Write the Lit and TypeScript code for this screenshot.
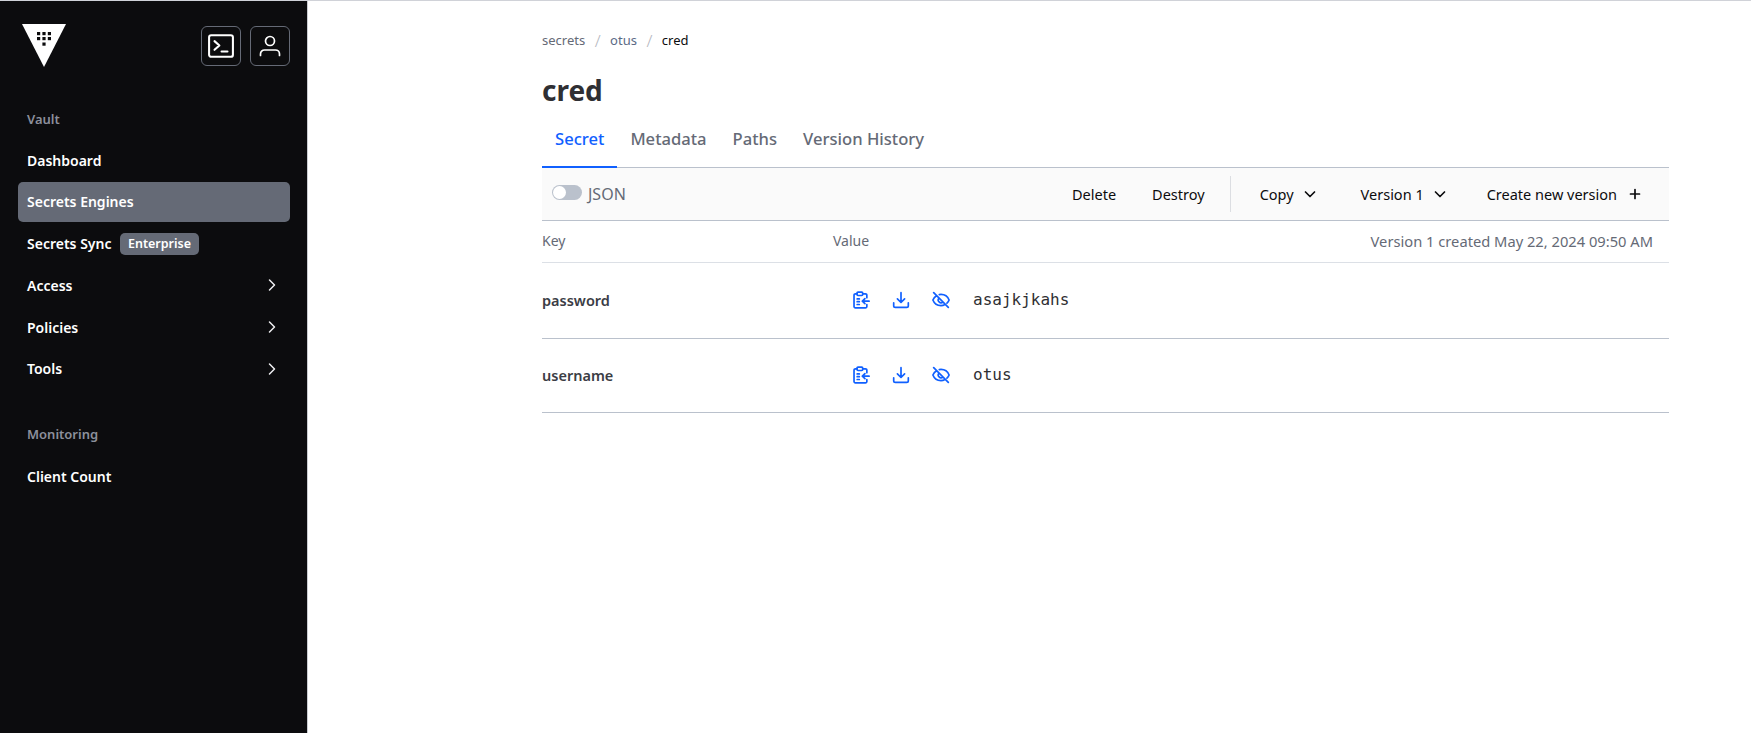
import { LitElement, html, css } from 'lit';
import { customElement } from 'lit/decorators.js';

const chevronRight = html`<svg class="chev" viewBox="0 0 16 16" width="16" height="16" fill="none" stroke="currentColor" stroke-width="1.5" stroke-linecap="round" stroke-linejoin="round"><path d="M5.500 3 10.500 8l-5 5"/></svg>`;
const chevronDown = html`<svg viewBox="0 0 16 16" width="16" height="16" fill="none" stroke="currentColor" stroke-width="1.700" stroke-linecap="round" stroke-linejoin="round"><path d="M3.500 6 8 10.500 12.500 6"/></svg>`;
const plus = html`<svg viewBox="0 0 16 16" width="16" height="16" fill="none" stroke="currentColor" stroke-width="1.700" stroke-linecap="round"><path d="M8 3.500v9M3.500 8h9"/></svg>`;

const clipboard = html`<svg viewBox="0 0 16 16" width="18" height="18" fill="none" stroke="currentColor" stroke-width="1.500" stroke-linecap="round" stroke-linejoin="round"><path d="M4.500 2.500H3a1.200 1.200 0 0 0-1.200 1.200v10.100A1.200 1.200 0 0 0 3 15h9a1.200 1.200 0 0 0 1.200-1.200v-1.800M9.500 2.500H12a1.200 1.200 0 0 1 1.200 1.200V6"/><rect x="4.500" y="1" width="5" height="3" rx=".8"/><path d="M4.600 7h1.900M4.600 9.500h1.900M4.600 12h1.900M15.200 9H9.200M11.500 6.700 9.200 9l2.300 2.300"/></svg>`;
const download = html`<svg viewBox="0 0 16 16" width="18" height="18" fill="none" stroke="currentColor" stroke-width="1.500" stroke-linecap="round" stroke-linejoin="round"><path d="M8 1.500v8.500M4.800 7 8 10.200 11.200 7M1.500 10.500v2.500a1.500 1.500 0 0 0 1.500 1.500h10a1.500 1.500 0 0 0 1.500-1.500v-2.500"/></svg>`;
const eyeOff = html`<svg viewBox="0 0 16 16" width="18" height="18" fill="none" stroke="currentColor" stroke-width="1.500" stroke-linecap="round" stroke-linejoin="round"><path d="M1.500 1.500l13 13M4 4.200C2.400 5.200 1.300 6.700.8 8c1 2.600 3.800 5 7.200 5 1.300 0 2.500-.4 3.600-1M6.500 3.200C7 3.100 7.500 3 8 3c3.400 0 6.200 2.400 7.200 5-.4 1-1 2-1.900 2.800M6.300 6.300a2.400 2.400 0 0 0 3.400 3.400"/></svg>`;

@customElement('app-root')
export class AppRoot extends LitElement {
  static styles = css`
    :host {
      display: block;
      height: 733px;
      overflow: hidden;
      font-family: "Noto Sans", "Open Sans", sans-serif;
      background: #fff;
    }
    .page {
      display: flex;
      height: 733px;
      box-sizing: border-box;
      border-top: 1px solid #d0d2d8;
    }
    .sidebar {
      width: 308px;
      flex: none;
      box-sizing: border-box;
      background: #0c0c0e;
      padding: 0 17px 0 18px;
      border-right: 1px solid #c9cbd0;
    }
    .top {
      display: flex;
      justify-content: space-between;
      align-items: flex-start;
      height: 101px;
      padding: 23px 0 0 4px;
      box-sizing: border-box;
    }
    .tools {
      display: flex;
      gap: 9px;
      margin-top: 2px;
    }
    .tool {
      width: 40px;
      height: 40px;
      box-sizing: border-box;
      border: 1px solid #656a76;
      border-radius: 6px;
      display: flex;
      align-items: center;
      justify-content: center;
      color: #fff;
    }
    .group {
      color: #8c909c;
      font-size: 13px;
      font-weight: 600;
      line-height: 18px;
      padding: 8px 9px 12px;
    }
    .group.second {
      margin-top: 28px;
      padding-bottom: 14px;
    }
    .nav {
      display: flex;
      align-items: center;
      height: 40px;
      margin-bottom: 1.750px;
      padding: 0 10px 0 9px;
      border-radius: 5px;
      color: #fff;
      font-size: 14px;
      font-weight: 600;
    }
    .nav.active {
      background: #656a76;
    }
    .nav .chev {
      margin-left: auto;
      color: #efeff1;
    }
    .badge {
      margin-left: 9px;
      padding: 0 7.500px;
      height: 22px;
      line-height: 21px;
      border-radius: 5px;
      background: #656a76;
      font-size: 12.500px;
      font-weight: 600;
    }
    main {
      flex: 1;
      min-width: 0;
      padding: 0 82px 0 234px;
    }
    .crumbs {
      display: flex;
      align-items: center;
      height: 22px;
      margin-top: 28px;
      font-size: 13px;
      color: #656a76;
    }
    .crumbs .sep {
      color: #b4b7c0;
      margin: 0 9.500px;
      font-size: 17px;
      font-weight: 300;
    }
    .crumbs .link {
      color: #5b6b85;
    }
    .crumbs .cur {
      color: #0c0c0e;
    }
    h1 {
      margin: 19px 0 0;
      font-size: 28px;
      line-height: 40px;
      font-weight: 700;
      color: #2f2f33;
    }
    .tabs {
      display: flex;
      height: 54px;
      box-sizing: border-box;
      margin-top: 4px;
      align-items: stretch;
      border-bottom: 1px solid #bac1cc;
    }
    .tab {
      display: flex;
      align-items: center;
      padding: 0 13px 3px;
      font-size: 16.600px;
      font-weight: 500;
      color: #656a76;
      margin-bottom: -1px;
      border-bottom: 2px solid transparent;
    }
    .tab.active {
      color: #1060ff;
      border-bottom-color: #1060ff;
    }
    .toolbar {
      display: flex;
      align-items: center;
      height: 53px;
      box-sizing: border-box;
      background: #fafafa;
      border-bottom: 1px solid #bac1cc;
      padding: 0 26px 0 10px;
      font-size: 14.500px;
      color: #0c0c0e;
    }
    .toggle {
      display: flex;
      align-items: center;
      color: #656a76;
      font-size: 16px;
      gap: 6px;
    }
    .switch {
      width: 30px;
      height: 15px;
      border-radius: 8px;
      background: #bac1cc;
      position: relative;
      margin-top: -4px;
    }
    .switch::after {
      content: "";
      position: absolute;
      left: 1px;
      top: 1px;
      width: 13px;
      height: 13px;
      border-radius: 50%;
      background: #fff;
    }
    .actions {
      margin-left: auto;
      display: flex;
      align-items: center;
    }
    .act {
      display: flex;
      align-items: center;
      gap: 8px;
    }
    .act.near {
      margin-left: 36px;
    }
    .act.version {
      margin-left: 43px;
    }
    .act.add {
      margin-left: 39px;
      gap: 10px;
    }
    .divider {
      width: 1px;
      height: 36px;
      background: #dcdee2;
      margin: 0 29px 0 25px;
    }
    .row {
      display: flex;
      align-items: center;
      box-sizing: border-box;
      border-bottom: 1px solid #bac1cc;
      height: 74px;
      padding-bottom: 2px;
    }
    .head + .row {
      height: 76px;
    }
    .row.head {
      height: 42px;
      padding-bottom: 2px;
      border-bottom-color: #dce0e6;
      font-size: 14px;
      color: #656a76;
    }
    .key {
      width: 291px;
      flex: none;
      font-size: 14.500px;
      font-weight: 600;
      color: #3b3d45;
    }
    .head .key {
      font-size: 14px;
      font-weight: 400;
      color: #656a76;
    }
    .val {
      display: flex;
      align-items: center;
      color: #1060ff;
    }
    .val .ico {
      display: flex;
      width: 40px;
      justify-content: center;
    }
    .icons {
      display: flex;
      padding-left: 8px;
    }
    .secret {
      margin-left: 12px;
      color: #2f2f33;
      font-family: "DejaVu Sans Mono", monospace;
      font-size: 16px;
    }
    .meta {
      margin-left: auto;
      padding-right: 16px;
      font-size: 14.700px;
    }
  `;

  renderRow(key: string, value: string) {
    return html`
      <div class="row">
        <div class="key">${key}</div>
        <div class="val">
          <div class="icons">
            <span class="ico">${clipboard}</span>
            <span class="ico">${download}</span>
            <span class="ico">${eyeOff}</span>
          </div>
          <span class="secret">${value}</span>
        </div>
      </div>
    `;
  }

  render() {
    return html`
      <div class="page">
        <aside class="sidebar">
          <div class="top">
            <svg width="44" height="43" viewBox="0 0 44 43">
              <path fill="#fff" d="M0 0h44L22 43z"/>
              <g fill="#0c0c0e">
                <rect x="15" y="8" width="3.200" height="3.200"/><rect x="20.400" y="8" width="3.200" height="3.200"/><rect x="25.800" y="8" width="3.200" height="3.200"/>
                <rect x="15" y="13" width="3.200" height="3.200"/><rect x="20.400" y="13" width="3.200" height="3.200"/><rect x="25.800" y="13" width="3.200" height="3.200"/>
                <rect x="20.400" y="18.500" width="3.200" height="3.200"/>
              </g>
            </svg>
            <div class="tools">
              <div class="tool">
                <svg width="26" height="26" viewBox="0 0 24 24" fill="none" stroke="currentColor" stroke-width="1.900" stroke-linecap="round" stroke-linejoin="round"><rect x="1" y="2" width="22" height="20" rx="2"/><path d="M6 7.500l4.500 4L6 15.500M12.500 17H18"/></svg>
              </div>
              <div class="tool">
                <svg width="24" height="24" viewBox="0 0 24 24" fill="none" stroke="currentColor" stroke-width="1.700" stroke-linecap="round"><circle cx="12" cy="7" r="4.500"/><path d="M2.500 21.500v-1.500a4 4 0 0 1 4-4h11a4 4 0 0 1 4 4v1.500"/></svg>
              </div>
            </div>
          </div>
          <div class="group">Vault</div>
          <div class="nav">Dashboard</div>
          <div class="nav active">Secrets Engines</div>
          <div class="nav">Secrets Sync<span class="badge">Enterprise</span></div>
          <div class="nav">Access${chevronRight}</div>
          <div class="nav">Policies${chevronRight}</div>
          <div class="nav">Tools${chevronRight}</div>
          <div class="group second">Monitoring</div>
          <div class="nav">Client Count</div>
        </aside>
        <main>
          <div class="crumbs">
            <span>secrets</span><span class="sep">/</span>
            <span class="link">otus</span><span class="sep">/</span>
            <span class="cur">cred</span>
          </div>
          <h1>cred</h1>
          <div class="tabs">
            <div class="tab active">Secret</div>
            <div class="tab">Metadata</div>
            <div class="tab">Paths</div>
            <div class="tab">Version History</div>
          </div>
          <div class="toolbar">
            <div class="toggle"><span class="switch"></span>JSON</div>
            <div class="actions">
              <span class="act">Delete</span>
              <span class="act near">Destroy</span>
              <span class="divider"></span>
              <span class="act">Copy ${chevronDown}</span>
              <span class="act version">Version 1 ${chevronDown}</span>
              <span class="act add">Create new version ${plus}</span>
            </div>
          </div>
          <div class="row head">
            <div class="key">Key</div>
            <div>Value</div>
            <div class="meta">Version 1 created May 22, 2024 09:50 AM</div>
          </div>
          ${this.renderRow('password', 'asajkjkahs')}
          ${this.renderRow('username', 'otus')}
        </main>
      </div>
    `;
  }
}
